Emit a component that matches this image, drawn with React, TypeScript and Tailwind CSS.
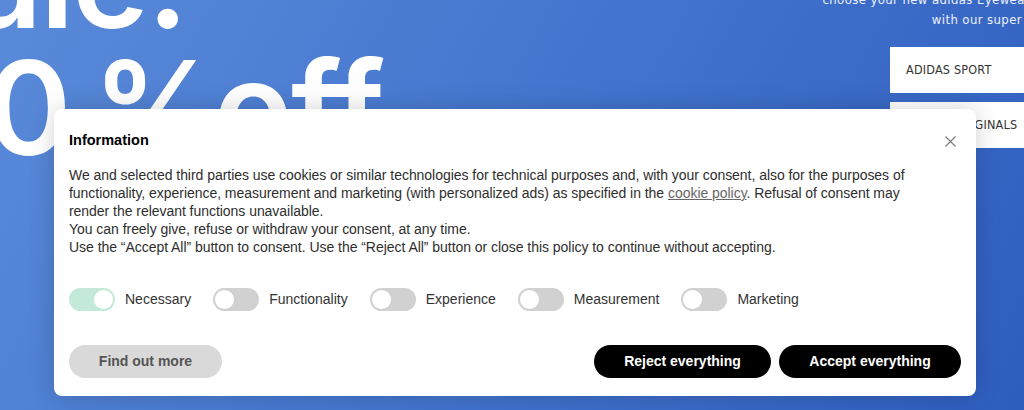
import React from "react";

function Toggle({ on }: { on?: boolean }) {
  return (
    <div
      className={
        "relative w-[46px] h-[23px] rounded-full shrink-0 " +
        (on ? "bg-[#c3ead8]" : "bg-[#d1d1d1]")
      }
    >
      <div
        className={
          "absolute top-[2px] w-[19px] h-[19px] rounded-full bg-white " +
          (on ? "right-[2px]" : "left-[2px]")
        }
      />
    </div>
  );
}

export default function App() {
  const cats = [
    { label: "Necessary", on: true },
    { label: "Functionality" },
    { label: "Experience" },
    { label: "Measurement" },
    { label: "Marketing" },
  ];
  return (
    <div className="relative w-[1024px] h-[410px] overflow-hidden bg-[linear-gradient(120deg,#5a8ad9_0%,#4677cf_45%,#2f5dbf_100%)]">
      <div className="flex justify-between">
        {/* hero */}
        <div
          className="ml-[-115px] mt-[-80px] text-white font-semibold text-[130px] leading-[122px] tracking-[-2px] whitespace-nowrap"
          style={{ fontFamily: "Inter, sans-serif" }}
        >
          <div>Sale.</div>
          <div className="ml-[20px] mt-[5px]">
            <span>30</span>
            <span className="ml-[23px]">%</span>
            <span className="ml-[-38px]"> off</span>
          </div>
        </div>
        {/* right column */}
        <div className="w-[134px] shrink-0 flex flex-col">
          <div
            className="ml-[-86px] w-[226px] mt-[-10px] text-right text-white/90 text-[13px] leading-[20px] tracking-[0.4px] whitespace-nowrap"
            style={{ fontFamily: "'DejaVu Sans Condensed', 'DejaVu Sans', sans-serif" }}
          >
            <div>choose your new adidas Eyewear</div>
            <div className="mr-[8px]">with our super</div>
          </div>
          <div
            className="mt-[17px] flex flex-col gap-[9px] text-[12.5px] text-[#333] tracking-[0.2px]"
            style={{ fontFamily: "'DejaVu Sans Condensed', 'DejaVu Sans', sans-serif" }}
          >
            <div className="h-[46px] bg-white flex items-center pl-[16px] whitespace-nowrap">ADIDAS SPORT</div>
            <div className="h-[46px] bg-white flex items-center pl-[16px] whitespace-nowrap">ADIDAS ORIGINALS</div>
          </div>
        </div>
      </div>

      {/* consent dialog */}
      <div
        className="absolute left-[54px] top-[109px] w-[922px] h-[287px] bg-white rounded-[8px] shadow-[0_0_24px_rgba(0,0,0,0.18)] pt-[23px] px-[15px] flex flex-col"
        style={{ fontFamily: "'Liberation Sans', Arial, sans-serif" }}
      >
        <div className="flex items-center justify-between h-[18px]">
          <div className="text-[14.5px] font-bold text-black">Information</div>
          <svg width="11" height="11" viewBox="0 0 11 11" className="mr-[5px]">
            <path d="M0.5 0.5 L10.5 10.5 M10.5 0.5 L0.5 10.5" stroke="#777" strokeWidth="1.1" fill="none" />
          </svg>
        </div>
        <div className="mt-[16px] w-[862px] text-[14px] leading-[18px] tracking-[-0.04px] text-[#2e2e2e]">
          <p>
            We and selected third parties use cookies or similar technologies for technical purposes and, with your consent, also for the purposes of
            functionality, experience, measurement and marketing (with personalized ads) as specified in the{" "}
            <span className="underline text-[#666]">cookie policy</span>. Refusal of consent may render the relevant functions unavailable.
          </p>
          <p>You can freely give, refuse or withdraw your consent, at any time.</p>
          <p>Use the “Accept All” button to consent. Use the “Reject All” button or close this policy to continue without accepting.</p>
        </div>
        <div className="mt-[32px] flex items-center gap-[22px]">
          {cats.map((c) => (
            <div key={c.label} className="flex items-center gap-[10px]">
              <Toggle on={c.on} />
              <span className="text-[14px] text-[#333]">{c.label}</span>
            </div>
          ))}
        </div>
        <div className="mt-[34px] flex items-center">
          <div className="w-[153px] h-[33px] rounded-full bg-[#d9d9d9] flex items-center justify-center text-[14px] font-bold text-[#555]">
            Find out more
          </div>
          <div className="ml-auto flex gap-[8px]">
            <div className="w-[177px] h-[33px] rounded-full bg-black flex items-center justify-center text-[14px] font-bold text-white">
              Reject everything
            </div>
            <div className="w-[182px] h-[33px] rounded-full bg-black flex items-center justify-center text-[14px] font-bold text-white">
              Accept everything
            </div>
          </div>
        </div>
      </div>
    </div>
  );
}
